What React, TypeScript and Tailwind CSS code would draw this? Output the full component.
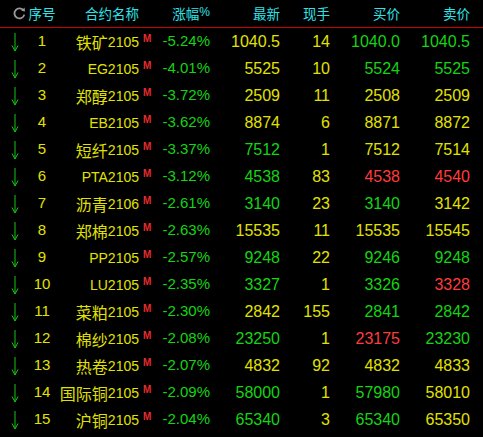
import React from "react";

type C = "y" | "g" | "r";
type Row = {
  n: number;
  name: string;
  pct: string;
  last: string;
  lastC: C;
  vol: string;
  bid: string;
  bidC: C;
  ask: string;
  askC: C;
};

const rows: Row[] = [
  { n: 1, name: "铁矿2105", pct: "-5.24%", last: "1040.5", lastC: "y", vol: "14", bid: "1040.0", bidC: "g", ask: "1040.5", askC: "g" },
  { n: 2, name: "EG2105", pct: "-4.01%", last: "5525", lastC: "y", vol: "10", bid: "5524", bidC: "g", ask: "5525", askC: "g" },
  { n: 3, name: "郑醇2105", pct: "-3.72%", last: "2509", lastC: "y", vol: "11", bid: "2508", bidC: "y", ask: "2509", askC: "y" },
  { n: 4, name: "EB2105", pct: "-3.62%", last: "8874", lastC: "y", vol: "6", bid: "8871", bidC: "y", ask: "8872", askC: "y" },
  { n: 5, name: "短纤2105", pct: "-3.37%", last: "7512", lastC: "g", vol: "1", bid: "7512", bidC: "y", ask: "7514", askC: "y" },
  { n: 6, name: "PTA2105", pct: "-3.12%", last: "4538", lastC: "g", vol: "83", bid: "4538", bidC: "r", ask: "4540", askC: "r" },
  { n: 7, name: "沥青2106", pct: "-2.61%", last: "3140", lastC: "g", vol: "23", bid: "3140", bidC: "g", ask: "3142", askC: "y" },
  { n: 8, name: "郑棉2105", pct: "-2.63%", last: "15535", lastC: "y", vol: "11", bid: "15535", bidC: "y", ask: "15545", askC: "y" },
  { n: 9, name: "PP2105", pct: "-2.57%", last: "9248", lastC: "g", vol: "22", bid: "9246", bidC: "g", ask: "9248", askC: "g" },
  { n: 10, name: "LU2105", pct: "-2.35%", last: "3327", lastC: "g", vol: "1", bid: "3326", bidC: "g", ask: "3328", askC: "r" },
  { n: 11, name: "菜粕2105", pct: "-2.30%", last: "2842", lastC: "y", vol: "155", bid: "2841", bidC: "g", ask: "2842", askC: "g" },
  { n: 12, name: "棉纱2105", pct: "-2.08%", last: "23250", lastC: "g", vol: "1", bid: "23175", bidC: "r", ask: "23230", askC: "g" },
  { n: 13, name: "热卷2105", pct: "-2.07%", last: "4832", lastC: "y", vol: "92", bid: "4832", bidC: "y", ask: "4833", askC: "y" },
  { n: 14, name: "国际铜2105", pct: "-2.09%", last: "58000", lastC: "g", vol: "1", bid: "57980", bidC: "g", ask: "58010", askC: "y" },
  { n: 15, name: "沪铜2105", pct: "-2.04%", last: "65340", lastC: "g", vol: "3", bid: "65340", bidC: "g", ask: "65350", askC: "y" },
];

const colorCls = (c: C) =>
  c === "y" ? "text-[#e2e200]" : c === "g" ? "text-[#14d414]" : "text-[#ff3c3c]";

const num = "font-['Liberation_Sans',Arial,sans-serif]";
const cjk = "font-['Noto_Sans_CJK_SC','Noto_Sans',sans-serif]";

function Arrow() {
  return (
    <svg width="10" height="20" viewBox="0 0 10 20" className="block">
      <line x1="5" y1="1" x2="5" y2="18.5" stroke="#16c816" strokeWidth="1" />
      <path d="M2 13.5 L5 19 L8 13.5" fill="none" stroke="#16c816" strokeWidth="1" />
    </svg>
  );
}

function Refresh() {
  return (
    <svg width="13" height="13" viewBox="0 0 13 13" className="block">
      <path d="M10.6 3.6 A5 5 0 1 0 11.3 7.6" fill="none" stroke="#9a9a9a" strokeWidth="1.8" />
      <path d="M8.2 3.8 L12 4.6 L11.6 0.6 Z" fill="#9a9a9a" />
    </svg>
  );
}

function Name({ name }: { name: string }) {
  const m = name.match(/^([^\x00-\x7f]*)(.*)$/);
  const zh = m ? m[1] : "";
  const code = m ? m[2] : name;
  return (
    <span className="whitespace-nowrap text-[#e2e200] flex items-center leading-none">
      {zh && <span className={`${cjk} text-[16px] leading-none`}>{zh}</span>}
      <span className={`${num} text-[14px] leading-none pt-[1px]`}>{code}</span>
    </span>
  );
}

export default function App() {
  return (
    <div className="w-[483px] h-[437px] bg-black overflow-hidden select-none">
      {/* header */}
      <div className={`flex items-center h-[28px] border-b border-[#c80000] ${cjk} text-[13.5px] text-[#2ee3ea]`}>
        <div className="w-[30px] flex justify-end pr-[4px]">
          <Refresh />
        </div>
        <div className="w-[24px] flex justify-center whitespace-nowrap">序号</div>
        <div className="w-[85px] flex justify-end whitespace-nowrap">合约名称</div>
        <div className="w-[16px]" />
        <div className="w-[55px] flex justify-end whitespace-nowrap">
          涨幅<span className={`${num} text-[12px]`}>%</span>
        </div>
        <div className="w-[70px] flex justify-end">最新</div>
        <div className="w-[50px] flex justify-end">现手</div>
        <div className="w-[70px] flex justify-end">买价</div>
        <div className="w-[70px] flex justify-end">卖价</div>
      </div>
      {/* rows */}
      <div className="flex flex-col">
        {rows.map((r) => (
          <div key={r.n} className={`flex items-center h-[27px] ${num}`}>
            <div className="w-[30px] flex justify-center pt-[1px]">
              <Arrow />
            </div>
            <div className="w-[24px] flex justify-center text-[15px] text-[#e2e200] whitespace-nowrap">{r.n}</div>
            <div className="w-[85px] flex justify-end">
              <Name name={r.name} />
            </div>
            <div className="w-[16px] self-start pt-[6px] pl-[4px] text-[10px] leading-none">
              <span className="block text-[10px] font-bold text-[#e82c2c] leading-none">M</span>
            </div>
            <div className="w-[55px] flex justify-end text-[15px] text-[#14d414]">{r.pct}</div>
            <div className={`w-[70px] flex justify-end text-[16px] ${colorCls(r.lastC)}`}>{r.last}</div>
            <div className="w-[50px] flex justify-end text-[16px] text-[#e2e200]">{r.vol}</div>
            <div className={`w-[70px] flex justify-end text-[16px] ${colorCls(r.bidC)}`}>{r.bid}</div>
            <div className={`w-[70px] flex justify-end text-[16px] ${colorCls(r.askC)}`}>{r.ask}</div>
          </div>
        ))}
      </div>
    </div>
  );
}
